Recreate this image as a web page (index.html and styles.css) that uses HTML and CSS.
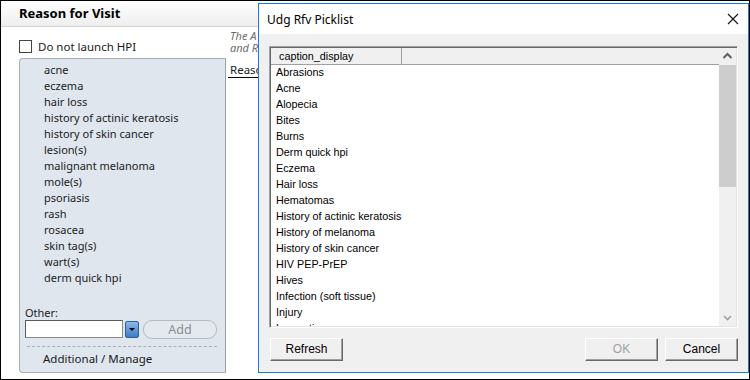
FILE: index.html
```html
<!DOCTYPE html>
<html lang="en">
  <head>
    <meta charset="UTF-8" />
    <title>Reason for Visit</title>
    <link rel="stylesheet" href="styles.css">
  </head>
  <body>
    <div id="frame">
      <div class="header">Reason for Visit</div>
      <div class="main">
        <div class="leftCol">
          <label class="hpiRow"><span class="checkBox"></span>Do not launch HPI</label>
          <div class="panel">
            <ul class="reasonList">
              <li>acne</li>
              <li>eczema</li>
              <li>hair loss</li>
              <li>history of actinic keratosis</li>
              <li>history of skin cancer</li>
              <li>lesion(s)</li>
              <li>malignant melanoma</li>
              <li>mole(s)</li>
              <li>psoriasis</li>
              <li>rash</li>
              <li>rosacea</li>
              <li>skin tag(s)</li>
              <li>wart(s)</li>
              <li>derm quick hpi</li>
            </ul>
            <div class="otherBox">
              <div class="otherLabel">Other:</div>
              <div class="otherRow">
                <div class="otherInput"></div>
                <div class="dropBtn"><span class="dropArrow"></span></div>
                <div class="addBtn">Add</div>
              </div>
              <div class="dashed"></div>
              <div class="manage">Additional / Manage</div>
            </div>
          </div>
        </div>
        <div class="midCol">
          <div class="hint">The A<br />and R</div>
          <div class="reasonHead">Reaso</div>
        </div>
      </div>

      <div id="dialog">
        <div class="titleBar">
          <span>Udg Rfv Picklist</span>
          <svg class="closeX" width="12" height="12" viewBox="0 0 12 12">
            <path d="M1 1 L11 11 M11 1 L1 11" stroke="#111" stroke-width="1.1" fill="none" />
          </svg>
        </div>
        <div class="dialogBody">
          <div class="listBox">
            <div class="listMain">
              <div class="colHead"><div class="colCell">caption_display</div></div>
              <div class="rows">
                <div>Abrasions</div>
                <div>Acne</div>
                <div>Alopecia</div>
                <div>Bites</div>
                <div>Burns</div>
                <div>Derm quick hpi</div>
                <div>Eczema</div>
                <div>Hair loss</div>
                <div>Hematomas</div>
                <div>History of actinic keratosis</div>
                <div>History of melanoma</div>
                <div>History of skin cancer</div>
                <div>HIV PEP-PrEP</div>
                <div>Hives</div>
                <div>Infection (soft tissue)</div>
                <div>Injury</div>
                <div>Lacerations</div>
              </div>
            </div>
            <div class="scrollBar">
              <svg class="arrow" width="17" height="17" viewBox="0 0 17 17">
                <path d="M4.5 10 L8.5 6 L12.5 10" stroke="#606060" stroke-width="2" fill="none" />
              </svg>
              <div class="thumb"></div>
              <div class="track"></div>
              <svg class="arrow" width="17" height="17" viewBox="0 0 17 17">
                <path d="M5 7 L8.5 10.5 L12 7" stroke="#a0a0a0" stroke-width="1.6" fill="none" />
              </svg>
            </div>
          </div>
          <div class="buttonRow">
            <div class="winBtn">Refresh</div>
            <div class="spacer"></div>
            <div class="winBtn disabled">OK</div>
            <div class="winBtn">Cancel</div>
          </div>
        </div>
      </div>
    </div>
  </body>
</html>
```

FILE: styles.css
```css
body {
  margin: 0;
  padding: 0;
}
#frame {
  position: relative;
  width: 750px;
  height: 380px;
  box-sizing: border-box;
  border: 1px solid #000;
  background-color: #fff;
  overflow: hidden;
  font-family: "Noto Sans", sans-serif;
  color: #1a1a1a;
}
.header {
  height: 25px;
  line-height: 25px;
  padding-left: 18px;
  font-size: 13px;
  font-weight: bold;
  color: #000;
  background: linear-gradient(#ffffff, #eeeeee);
  border-bottom: 1px solid #d2d2d2;
}
.main {
  display: flex;
  height: 346px;
}
.leftCol {
  width: 207px;
  margin-left: 18px;
  display: flex;
  flex-direction: column;
}
.hpiRow {
  display: flex;
  align-items: center;
  height: 17px;
  margin-top: 11px;
  margin-bottom: 3px;
  font-size: 11.5px;
}
.checkBox {
  width: 11px;
  height: 11px;
  border: 1px solid #444;
  background-color: #fff;
  margin-right: 6px;
}
.panel {
  flex: 1;
  display: flex;
  flex-direction: column;
  background-color: #dfe6ee;
  border: 1px solid #a9b1bb;
  border-right: 1px solid #9aa0a8;
  border-radius: 4px 0 0 4px;
  padding: 3px 0 0 5px;
}
.reasonList {
  list-style: none;
  margin: 0;
  padding: 0 0 0 19px;
  font-size: 11px;
  color: #222;
}
.reasonList li {
  height: 16px;
  line-height: 16px;
}
.otherBox {
  margin-top: auto;
  padding-bottom: 2px;
}
.otherLabel {
  font-size: 11px;
  line-height: 13px;
  height: 13px;
}
.otherRow {
  display: flex;
  align-items: center;
  height: 20px;
}
.otherInput {
  width: 96px;
  height: 16px;
  background-color: #fff;
  border: 1px solid #8a8a8a;
  border-top-color: #5a5a5a;
  border-left-color: #5a5a5a;
}
.dropBtn {
  width: 12px;
  height: 15px;
  margin-left: 2px;
  border: 1px solid #2e5f95;
  border-radius: 2px;
  background: linear-gradient(#8ab8ea, #3b7cc4);
  display: flex;
  align-items: center;
  justify-content: center;
}
.dropArrow {
  width: 0;
  height: 0;
  border-left: 3px solid transparent;
  border-right: 3px solid transparent;
  border-top: 3px solid #000;
}
.addBtn {
  width: 72px;
  height: 17px;
  margin-left: 4px;
  border: 1px solid #b6b9be;
  border-radius: 9px;
  background-color: #e4e9ef;
  color: #8a8d92;
  font-size: 12.5px;
  line-height: 17px;
  text-align: center;
}
.dashed {
  margin: 7px 8px 0 2px;
  border-top: 1px dashed #a8aeb6;
}
.manage {
  padding-left: 18px;
  height: 23px;
  line-height: 24px;
  font-size: 11.5px;
  color: #1a1a1a;
}
.midCol {
  width: 32px;
  padding-left: 4px;
  box-sizing: border-box;
  overflow: hidden;
  white-space: nowrap;
}
.hint {
  margin-top: 3px;
  font-size: 11px;
  line-height: 12px;
  font-style: italic;
  color: #6c6c6c;
}
.reasonHead {
  margin-top: 8px;
  margin-left: -2px;
  padding-left: 2px;
  font-size: 11.5px;
  line-height: 15px;
  border-bottom: 1px solid #000;
}

#dialog {
  position: absolute;
  left: 257px;
  top: 2px;
  width: 491px;
  height: 370px;
  box-sizing: border-box;
  border: 1px solid #1a7fd4;
  background-color: #f0f0f0;
  display: flex;
  flex-direction: column;
}
.titleBar {
  height: 30px;
  background-color: #fff;
  display: flex;
  align-items: center;
  justify-content: space-between;
  padding: 0 9px 0 8px;
  font-size: 12px;
  color: #000;
}
.closeX {
  display: block;
}
.dialogBody {
  flex: 1;
  padding: 12px 10px 10px 10px;
  display: flex;
  flex-direction: column;
  font-family: "Liberation Sans", Arial, sans-serif;
  font-size: 10.8px;
  color: #000;
}
.listBox {
  height: 282px;
  box-sizing: border-box;
  border: 1px solid;
  border-color: #a0a0a0 #ffffff #ffffff #a0a0a0;
  box-shadow: inset 1px 1px 0 #696969, inset -1px -1px 0 #e3e3e3;
  background-color: #fff;
  display: flex;
  padding: 1px;
  overflow: hidden;
}
.listMain {
  flex: 1;
  overflow: hidden;
}
.colHead {
  height: 17px;
  background-color: #f0f0f0;
  border-bottom: 1px solid #a0a0a0;
  box-sizing: border-box;
  display: flex;
}
.colCell {
  width: 131px;
  box-sizing: border-box;
  border-right: 1px solid #a0a0a0;
  padding-left: 8px;
  line-height: 16px;
}
.rows div {
  height: 16px;
  line-height: 15px;
  padding-left: 5px;
}
.scrollBar {
  width: 17px;
  display: flex;
  flex-direction: column;
  background-color: #f0f0f0;
}
.arrow {
  display: block;
  flex: none;
}
.thumb {
  height: 122px;
  background-color: #cdcdcd;
}
.track {
  flex: 1;
}
.buttonRow {
  display: flex;
  gap: 7px;
  margin-top: 10px;
  padding-left: 1px;
}
.spacer {
  flex: 1;
}
.winBtn {
  width: 73px;
  height: 23px;
  box-sizing: border-box;
  border: 1px solid;
  border-color: #fff #696969 #696969 #fff;
  box-shadow: inset -1px -1px 0 #a0a0a0;
  background-color: #f0f0f0;
  text-align: center;
  line-height: 21px;
  font-size: 12px;
}
.winBtn.disabled {
  color: #a0a0a0;
}
```
